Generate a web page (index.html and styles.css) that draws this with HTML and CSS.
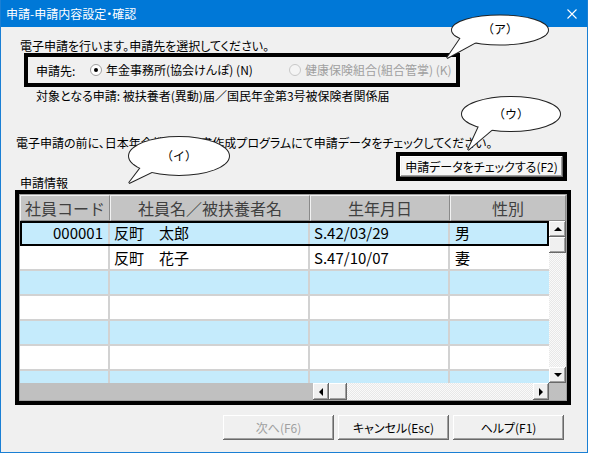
FILE: index.html
```html
<!DOCTYPE html>
<html lang="ja">
<head>
    <meta charset="UTF-8">
    <title>申請-申請内容設定・確認</title>
    <link rel="stylesheet" href="styles.css">
</head>
<body>
    <div class="window">
        <div class="titlebar">
            <span class="title">申請-申請内容設定・確認</span>
            <svg class="close" width="10" height="10" viewBox="0 0 10 10">
                <path d="M0.5 0.5 L9.5 9.5 M9.5 0.5 L0.5 9.5" stroke="#fff" stroke-width="1.1" fill="none"/>
            </svg>
        </div>

        <div class="client">
            <p class="lead">電子申請を行います。申請先を選択してください。</p>

            <div class="target-box">
                <span class="target-label">申請先:</span>
                <label class="radio radio-first"><span class="radio-dot checked"></span>年金事務所(協会けんぽ) (N)</label>
                <label class="radio disabled"><span class="radio-dot"></span>健康保険組合(組合管掌) (K)</label>
            </div>

            <p class="target-text">対象となる申請: 被扶養者(異動)届／国民年金第3号被保険者関係届</p>
            <p class="note">電子申請の前に、日本年金機構の届書作成プログラムにて申請データをチェックしてください。</p>

            <div class="check-row">
                <span class="section-label">申請情報</span>
                <div class="check-frame">
                    <button class="btn check-btn">申請データをチェックする(F2)</button>
                </div>
            </div>

            <div class="grid">
                <div class="grid-inner">
                    <div class="grid-head">
                        <div class="head-cell">社員コード</div>
                        <div class="head-cell">社員名／被扶養者名</div>
                        <div class="head-cell">生年月日</div>
                        <div class="head-cell">性別</div>
                    </div>
                    <div class="grid-body">
                        <div class="rows">
                            <div class="row alt selected">
                                <div class="cell code">000001</div>
                                <div class="cell">反町　太郎</div>
                                <div class="cell">S.42/03/29</div>
                                <div class="cell last">男</div>
                            </div>
                            <div class="row">
                                <div class="cell code"></div>
                                <div class="cell">反町　花子</div>
                                <div class="cell">S.47/10/07</div>
                                <div class="cell last">妻</div>
                            </div>
                            <div class="row alt"><div class="cell"></div><div class="cell"></div><div class="cell"></div><div class="cell last"></div></div>
                            <div class="row"><div class="cell"></div><div class="cell"></div><div class="cell"></div><div class="cell last"></div></div>
                            <div class="row alt"><div class="cell"></div><div class="cell"></div><div class="cell"></div><div class="cell last"></div></div>
                            <div class="row"><div class="cell"></div><div class="cell"></div><div class="cell"></div><div class="cell last"></div></div>
                            <div class="row alt"><div class="cell"></div><div class="cell"></div><div class="cell"></div><div class="cell last"></div></div>
                        </div>
                        <div class="vscroll">
                            <div class="sb-btn"><span class="arrow up"></span></div>
                            <div class="sb-btn"></div>
                            <div class="sb-track"></div>
                            <div class="sb-btn"><span class="arrow down"></span></div>
                        </div>
                    </div>
                    <div class="grid-foot">
                        <div class="frozen-pad"></div>
                        <div class="hscroll">
                            <div class="sb-btn"><span class="arrow left"></span></div>
                            <div class="sb-btn thumb"></div>
                            <div class="sb-track"></div>
                            <div class="sb-btn"><span class="arrow right"></span></div>
                        </div>
                        <div class="corner"></div>
                    </div>
                </div>
            </div>

            <div class="buttons">
                <button class="btn disabled">次へ(F6)</button>
                <button class="btn">キャンセル(Esc)</button>
                <button class="btn">ヘルプ(F1)</button>
            </div>
        </div>

        <!-- speech bubbles -->
        <svg class="bubbles" width="588" height="453" viewBox="0 0 588 453">
            <g stroke="#222" stroke-width="2" fill="#fff">
                <ellipse cx="500" cy="30" rx="48" ry="14.5"/>
                <polygon points="462,36 480,40 447,58"/>
                <ellipse cx="511" cy="114" rx="49" ry="17"/>
                <polygon points="480,124 494,128 468,150"/>
                <ellipse cx="179" cy="156" rx="50" ry="19"/>
                <polygon points="142,166 156,170 129,183"/>
            </g>
            <g fill="#fff">
                <ellipse cx="500" cy="30" rx="48" ry="14.5"/>
                <polygon points="462,36 480,40 447,58"/>
                <ellipse cx="511" cy="114" rx="49" ry="17"/>
                <polygon points="480,124 494,128 468,150"/>
                <ellipse cx="179" cy="156" rx="50" ry="19"/>
                <polygon points="142,166 156,170 129,183"/>
            </g>
            <g class="bubble-text" text-anchor="middle">
                <text x="500" y="34">（ア）</text>
                <text x="511" y="119">（ウ）</text>
                <text x="179" y="161">（イ）</text>
            </g>
        </svg>
    </div>
</body>
</html>
```

FILE: styles.css
```css
* {
    margin: 0;
    padding: 0;
    box-sizing: border-box;
}

body {
    font-family: "Noto Sans CJK JP", "Liberation Sans", sans-serif;
    font-size: 12px;
    font-feature-settings: "palt";
    color: #000;
    background: #fff;
}

/* Window frame */
.window {
    position: relative;
    width: 588px;
    height: 453px;
    background: #f0f0f0;
    border: 1px solid #1a7fd4;
    border-top: none;
}

.titlebar {
    height: 27px;
    background: #0078d7;
    color: #fff;
    display: flex;
    align-items: center;
    justify-content: space-between;
    padding: 0 10px 0 5px;
}

.title {
    line-height: 14px;
}

/* Client area */
.lead {
    margin: 12px 0 0 19px;
    line-height: 14px;
}

.target-box {
    margin-left: 23px;
    width: 436px;
    height: 34px;
    border: 4px solid #000;
    display: flex;
    align-items: center;
    padding-left: 8px;
}

.target-label {
    width: 54px;
}

.radio {
    display: flex;
    align-items: center;
    line-height: 14px;
}

.radio-first {
    width: 199px;
}

.radio.disabled {
    color: #a0a0a0;
}

.radio-dot {
    width: 12px;
    height: 12px;
    margin-right: 4px;
    border-radius: 50%;
    border: 1px solid #a0a0a0;
    background: #fff;
    display: flex;
    align-items: center;
    justify-content: center;
}

.radio-dot.checked::after {
    content: "";
    width: 4px;
    height: 4px;
    border-radius: 50%;
    background: #000;
}

.radio.disabled .radio-dot {
    border-color: #c8c8c8;
    background: #f4f4f4;
}

.target-text {
    margin: 2px 0 0 35px;
    line-height: 14px;
}

.note {
    margin: 33px 0 0 15px;
    line-height: 14px;
}

.check-row {
    margin-top: 2px;
    height: 38px;
    display: flex;
    justify-content: space-between;
    padding: 0 20px 0 19px;
}

.section-label {
    margin-top: 24px;
    line-height: 14px;
}

.check-frame {
    width: 171px;
    height: 29px;
    border: 4px solid #000;
}

/* Classic 3D push button */
.btn {
    font: inherit;
    font-size: 12px;
    color: #000;
    background: #f0f0f0;
    border: none;
    width: 111px;
    height: 25px;
    box-shadow: inset -1px -1px #696969, inset 1px 1px #fff, inset -2px -2px #a0a0a0, inset 2px 2px #f0f0f0;
}

.btn.disabled {
    color: #a0a0a0;
}

.check-btn {
    width: 100%;
    height: 100%;
    background: #f6f6f6;
}

/* Data grid */
.grid {
    margin-left: 14px;
    width: 556px;
    height: 215px;
    border: 4px solid #000;
    font-feature-settings: normal;
}

.grid-inner {
    height: 100%;
    border: 1px solid #a0a0a0;
    display: flex;
    flex-direction: column;
}

.grid-head {
    display: grid;
    grid-template-columns: 90px 200px 140px 116px;
    height: 26px;
    background: #c4c4c4;
}

.head-cell {
    font-size: 16px;
    color: #404040;
    text-align: center;
    line-height: 24px;
    border-top: 1px solid #f2f2f2;
    border-left: 1px solid #f2f2f2;
    border-right: 1px solid #8a8a8a;
    border-bottom: 1px solid #8a8a8a;
}

.grid-body {
    display: flex;
    height: 162px;
}

.rows {
    width: 529px;
    overflow: hidden;
    background: #fff;
}

.row {
    display: grid;
    grid-template-columns: 90px 200px 140px 99px;
    height: 25px;
    background: #fff;
}

.row.alt {
    background: #c5ebfc;
}

.row.selected {
    outline: 2px solid #000;
    outline-offset: -2px;
}

.cell {
    font-size: 15px;
    line-height: 23px;
    padding-left: 4px;
    border-right: 2px solid #d2d2d2;
    border-bottom: 2px solid #d2d2d2;
    white-space: nowrap;
}

.cell.code {
    text-align: right;
    padding: 0 5px 0 0;
}

.cell.last {
    border-right: none;
    padding-left: 5px;
}

/* Scrollbars */
.vscroll {
    width: 17px;
    display: flex;
    flex-direction: column;
}

.sb-btn {
    width: 17px;
    height: 16px;
    flex-shrink: 0;
    background: #f0f0f0;
    box-shadow: inset -1px -1px #696969, inset 1px 1px #fff, inset -2px -2px #a0a0a0;
    display: flex;
    align-items: center;
    justify-content: center;
}

.sb-track {
    flex: 1;
    background-color: #fafafa;
    background-image: repeating-conic-gradient(#e8e8e8 0 25%, #fafafa 0 50%);
    background-size: 2px 2px;
}

.arrow {
    width: 0;
    height: 0;
}

.arrow.up {
    border-left: 4px solid transparent;
    border-right: 4px solid transparent;
    border-bottom: 4px solid #000;
}

.arrow.down {
    border-left: 4px solid transparent;
    border-right: 4px solid transparent;
    border-top: 4px solid #000;
}

.arrow.left {
    border-top: 4px solid transparent;
    border-bottom: 4px solid transparent;
    border-right: 4px solid #000;
}

.arrow.right {
    border-top: 4px solid transparent;
    border-bottom: 4px solid transparent;
    border-left: 4px solid #000;
}

.grid-foot {
    display: flex;
    height: 17px;
    background: #c0c0c0;
}

.frozen-pad {
    width: 293px;
}

.hscroll {
    width: 236px;
    display: flex;
}

.hscroll .sb-btn {
    width: 16px;
    height: 17px;
}

.hscroll .thumb {
    width: 18px;
}

.corner {
    flex: 1;
}

/* Bottom buttons */
.buttons {
    margin: 10px 0 0 222px;
    display: flex;
    gap: 4px;
}

/* Speech bubbles over the dialog */
.bubbles {
    position: absolute;
    top: 0;
    left: -1px;
    pointer-events: none;
}

.bubble-text {
    font-size: 12px;
    fill: #000;
    font-feature-settings: normal;
}
```
